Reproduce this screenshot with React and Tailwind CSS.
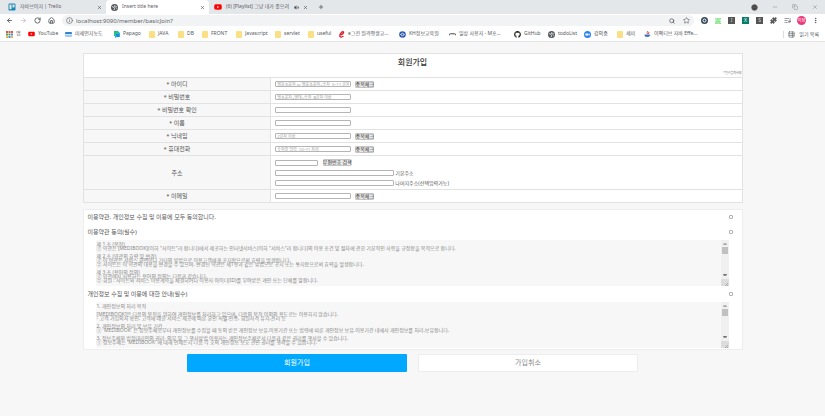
import React from "react";
import { ArrowLeft, ArrowRight, RotateCw, House, Info, Search, Star, Puzzle, ListMusic, EllipsisVertical, X, Plus, Minus, Copy, Volume2, CircleChevronDown, TableProperties, Mail } from "lucide-react";
import { FaGithub, FaYoutube, FaTrello, FaJava } from "react-icons/fa";

const Folder = () => <span className="h-[7px] w-[6px] rounded-[1px] bg-[#fbdf85]" />;

const WorldIcon = () => (
  <svg viewBox="0 0 16 16" className="size-[7px] shrink-0">
    <circle cx="8" cy="8" r="8" fill="#50555a" />
    <path d="M2 6l4 1 2 3-1 4M7 2l2 2-1 2 3 1 3-1M11 10l2 1" stroke="#f2f3f4" strokeWidth="2" fill="none" />
  </svg>
);

const bookmarks = [
  { w: "w-[22px]", icon: <svg viewBox="0 0 7 7" className="size-[7px]"><path d="M0 0h2v2H0zM2.5 0h2v2h-2zM5 0h2v2H5z" fill="#e8553e" /><path d="M0 2.5h2v2H0zM2.5 2.5h2v2h-2z" fill="#45a35b" /><path d="M5 2.5h2v2H5zM2.5 5h2v2h-2z" fill="#4c86e8" /><path d="M0 5h2v2H0zM5 5h2v2H5z" fill="#f0b83b" /></svg>, text: "앱" },
  { w: "w-[37px]", icon: <FaYoutube className="size-[8px] text-[#f00]" />, text: "YouTube" },
  { w: "w-[48px]", icon: <svg viewBox="0 0 7 7" className="size-[7px]"><path d="M0 2q0-1 1-1h5q1 0 1 1v1H0z" fill="#2f83cf" /><path d="M0 3.5h7V5q0 1-1 1H1Q0 6 0 5z" fill="#9ccbef" /></svg>, text: "미세먼지농도" },
  { w: "w-[35px]", icon: <svg viewBox="0 0 7 7" className="size-[7px]"><path d="M1 0h4l2 2v4H4L2 7V5H1z" fill="#20b8d8" /><path d="M1 0h4v2L3 4H1z" fill="#25c279" /><path d="M3 3h3v3H4z" fill="#287de8" /></svg>, text: "Papago" },
  { w: "w-[29px]", icon: <Folder />, text: "JAVA" },
  { w: "w-[24px]", icon: <Folder />, text: "DB" },
  { w: "w-[34px]", icon: <Folder />, text: "FRONT" },
  { w: "w-[39px]", icon: <Folder />, text: "Javascript" },
  { w: "w-[33px]", icon: <Folder />, text: "servlet" },
  { w: "w-[31px]", icon: <Folder />, text: "useful" },
  { w: "w-[61px]", icon: <svg viewBox="0 0 7 7" className="size-[7px]"><path d="M1.5 4.2Q5.5 3.2 5.6 1.2 5 .2 3.4 1.4 1.2 3.4 1.8 5.4 3 7 5.4 5" fill="none" stroke="#d8202c" strokeWidth="1.3" /></svg>, text: "e그린 원격평생교..." },
  { w: "w-[50px]", icon: <svg viewBox="0 0 7 7" className="size-[7px]"><circle cx="3.5" cy="3.5" r="3.3" fill="#2c5cae" /><path d="M1.5 3.5Q3.5 1 5.5 3.5 3.5 6 1.5 3.5" fill="none" stroke="#fff" strokeWidth=".8" /></svg>, text: "KH정보교육원" },
  { w: "w-[65px]", icon: <svg viewBox="0 0 7 7" className="size-[7px]"><path d="M0 4.5Q0 2.8 1.5 2.8h4Q7 2.8 7 4.5" fill="none" stroke="#444" strokeWidth="1" /></svg>, text: "일상 사용자 - M포..." },
  { w: "w-[34px]", icon: <FaGithub className="size-[7px] text-[#222]" />, text: "GitHub" },
  { w: "w-[36px]", icon: <WorldIcon />, text: "todoList" },
  { w: "w-[32px]", icon: <svg viewBox="0 0 7 7" className="size-[7px]"><circle cx="3.5" cy="3.5" r="3.5" fill="#2b82f5" /><path d="M1.4 2.5h2.8v2H1.4zM4.5 3l1.2-.6v2.2L4.5 4z" fill="#fff" /></svg>, text: "강의줌" },
  { w: "w-[28px]", icon: <Folder />, text: "세미" },
  {
    w: "w-[62px]",
    icon: (
      <svg viewBox="0 0 7 7" className="size-[7px]">
        <path d="M4 0Q2.4 1.4 3.6 2.8M5.2 1Q4 2 4.6 3" fill="none" stroke="#e0393e" strokeWidth=".9" />
        <path d="M.6 3.6h5.2v1.2Q5.4 6 3.2 6 1 6 .6 4.8zM5.8 3.9q1.2 0 .2 1.3" fill="#3f74c4" />
      </svg>
    ),
    text: "이펙티브 자바 Effe...",
  },
];

function Tab({ icon, title, active, audio }) {
  return (
    <div className={"flex h-full w-[103px] shrink-0 items-center gap-[4px] pr-[4px] pl-[5px] " + (active ? "rounded-t-[4px] bg-white" : "")}>
      {icon}
      <span className="flex-1 text-[5px] whitespace-nowrap text-[#5c6064]">{title}</span>
      {audio && <Volume2 className="size-[5px] shrink-0 fill-[#555]" />}
      <button aria-label="탭 닫기"><X className="size-[5px]" strokeWidth={3} /></button>
    </div>
  );
}

function Browser() {
  return (
    <header className="border-b border-[#e2e3e5] bg-white text-[#55595d]">
      <div className="flex h-[14px] items-center bg-[#e4e7ea] pl-[3px]">
        <Tab icon={<FaTrello className="size-[8px] text-[#1787b5]" />} title="자바브이지 | Trello" />
        <Tab active icon={<WorldIcon />} title="Insert title here" />
        <Tab audio icon={<FaYoutube className="size-[8px] shrink-0 text-[#f00]" />} title="(6) [Playlist] 그냥 내가 좋으려" />
        <button aria-label="새 탭" className="ml-[6px]"><Plus className="size-[6px]" strokeWidth={3} /></button>
        <div className="ml-auto flex items-center gap-[14px] pr-[7px] text-[#888]">
          <CircleChevronDown className="size-[7px] fill-[#444] text-[#777]" />
          <button aria-label="최소화"><Minus className="size-[6px]" /></button>
          <button aria-label="창 복원"><Copy className="size-[6px]" /></button>
          <button aria-label="닫기"><X className="size-[6px]" /></button>
        </div>
      </div>
      <div className="flex h-[13px] items-center gap-[7px] pr-[6px] pl-[6px]">
        <button aria-label="뒤로"><ArrowLeft className="size-[7px]" strokeWidth={3} /></button>
        <button aria-label="앞으로" className="text-[#aaa]"><ArrowRight className="size-[7px]" /></button>
        <button aria-label="새로고침"><RotateCw className="size-[7px]" strokeWidth={3} /></button>
        <button aria-label="홈"><House className="size-[7px]" strokeWidth={3} /></button>
        <div className="flex h-[11px] flex-1 items-center gap-[3px] rounded-full bg-[#f1f3f4] px-[4px]">
          <Info className="size-[7px]" />
          <input aria-label="주소창" defaultValue="localhost:9090/member/basicJoin?" className="min-w-0 flex-1 bg-transparent text-[6px] leading-[8px] text-[#62666a] outline-none" />
          <Search className="size-[6px]" strokeWidth={3} />
          <Star className="ml-[5px] size-[7px]" />
        </div>
        <svg viewBox="0 0 7 7" className="size-[7px]"><circle cx="3.5" cy="3.5" r="3.5" fill="#34495b" /><circle cx="3.5" cy="3.5" r="1.5" fill="none" stroke="#fff" /></svg>
        <Mail className="size-[6px] bg-[#7de27e] text-white" />
        <span className="size-[7px] bg-[#555] text-center text-[5px] leading-[7px] text-[#ddd]">I</span>
        <span className="size-[7px] bg-[#087d6b] text-center text-[5px] leading-[7px] text-white">X</span>
        <span className="size-[7px] bg-[#555] text-center text-[5px] leading-[7px] text-[#ddd]">S</span>
        <Puzzle className="size-[7px] fill-[#555]" />
        <ListMusic className="size-[7px]" />
        <span className="-mx-[1px] size-[9px] rounded-full bg-[#e9387b] text-center text-[4px] leading-[9px] text-white">미정</span>
        <EllipsisVertical className="size-[7px]" strokeWidth={3} />
      </div>
      <nav className="flex h-[14px] items-center pr-[6px] pl-[6px] text-[5px]">
        {bookmarks.map((b) => (
          <a key={b.text} href="#" className={"flex shrink-0 items-center gap-[3px] whitespace-nowrap " + b.w}>
            <span className="flex w-[7px] shrink-0 justify-center">{b.icon}</span>
            <span>{b.text}</span>
          </a>
        ))}
        <a href="#" className="ml-auto flex items-center gap-[4px] border-l border-[#ddd] pl-[4px] leading-[7px] whitespace-nowrap">
          <TableProperties className="size-[7px]" />읽기 목록
        </a>
      </nav>
    </header>
  );
}

const field = "h-[6px] rounded-[1px] border border-[#b5b5b5] bg-white px-px text-[4px] leading-[4px] placeholder:text-[#999] outline-none";
const smallButton = "flex h-[7px] items-center justify-center rounded-[1px] border border-[#c5c5c5] bg-[#e9e9e9] text-[5px] leading-[5px] whitespace-nowrap text-[#333]";

function Row({ id, label, placeholder, button, type = "text" }) {
  return (
    <tr className="h-[13px]">
      <th scope="row" className="border border-[#e2e2e2] bg-[#f7f7f7] p-0 text-[6px] leading-[8px] font-normal">
        <label htmlFor={id}>* {label}</label>
      </th>
      <td className="border border-[#e2e2e2] bg-white p-0 pl-[4px]">
        <div className="flex items-center gap-[4px]">
          <input id={id} type={type} placeholder={placeholder} className={"w-[76px] " + field} />
          {button && <button type="button" className={"w-[19px] " + smallButton}>중복체크</button>}
        </div>
      </td>
    </tr>
  );
}

const terms = `제 1 조 (목적)
① 약관은 [MEDIBOOK](이하 "사이트"라 합니다)에서 제공하는 인터넷서비스(이하 "서비스"라 합니다)의 이용 조건 및 절차에 관한 기본적인 사항을 규정함을 목적으로 합니다.

제 2 조 (약관의 효력 및 변경)
① 이 약관은 서비스 화면이나 기타의 방법으로 이용고객에게 공지함으로써 효력을 발생합니다.
② 사이트는 이 약관의 내용을 변경할 수 있으며, 변경된 약관은 제1항과 같은 방법으로 공지 또는 통지함으로써 효력을 발생합니다.

제 3 조 (용어의 정의)
① 약관에서 사용하는 용어의 정의는 다음과 같습니다.
② 회원 : 사이트와 서비스 이용계약을 체결하거나 이용자 아이디(ID)를 부여받은 개인 또는 단체를 말합니다.`;

const privacy = `1. 개인정보의 처리 목적

[MEDIBOOK]은 다음의 목적을 위하여 개인정보를 처리하고 있으며, 다음의 목적 이외의 용도로는 이용하지 않습니다.
- 고객 가입의사 확인, 고객에 대한 서비스 제공에 따른 본인 식별.인증, 회원자격 유지.관리 등

2. 개인정보의 처리 및 보유 기간
① 'MEDIBOOK' 은 정보주체로부터 개인정보를 수집할 때 동의 받은 개인정보 보유.이용기간 또는 법령에 따른 개인정보 보유.이용기간 내에서 개인정보를 처리.보유합니다.

3. 정보주체와 법정대리인의 권리· 의무 및 그 행사방법 이용자는 개인정보주체로서 다음과 같은 권리를 행사할 수 있습니다.
① 정보주체는 'MEDIBOOK' 에 대해 언제든지 다음 각 호의 개인정보 보호 관련 권리를 행사할 수 있습니다.`;

function Terms({ label, text }) {
  return (
    <div className="mr-[13px] ml-[12px] flex h-[46px] bg-[#f7f7f7]">
      <textarea aria-label={label} readOnly wrap="off" value={text} className="block h-full min-w-0 flex-1 resize-none overflow-hidden px-[1px] pt-[2px] text-[5px] leading-[4px] text-[#888] outline-none" />
      <div className="flex w-[8px] flex-col items-center bg-[#f0f0f0] pt-[3px]">
        <span className="h-[2px] w-[4px] rounded-t-full bg-[#aaa]" />
        <span className="mt-[2px] h-[7px] w-[6px] bg-[#c1c1c1]" />
        <span className="mt-auto mb-[3px] h-[2px] w-[4px] rounded-b-full bg-[#777]" />
        <svg viewBox="0 0 8 7" className="h-[7px] w-full bg-[#dcdcdc]"><path d="M4 7l3-3M6 7l1-1" stroke="#999" strokeWidth=".8" /></svg>
      </div>
    </div>
  );
}

function Agree({ id, label }) {
  return (
    <div className="flex h-[15px] items-center justify-between pr-[9px] pb-[2px] pl-[4px]">
      <label htmlFor={id} className="text-[6px] leading-[8px]">{label}</label>
      <input id={id} type="checkbox" className="size-[4px] appearance-none rounded-[1px] border border-[#b0b0b0] bg-white" />
    </div>
  );
}

export default function App() {
  return (
    <div className="min-h-screen bg-[#f7f7f7] font-['Noto_Sans','Noto_Sans_CJK_KR',sans-serif] text-[#555]">
      <Browser />
      <form className="mx-auto w-4/5 pt-[11px]" onSubmit={(e) => e.preventDefault()}>
        <div className="h-[24px] border border-b-0 border-[#e2e2e2] bg-white">
          <h1 className="pt-px text-center text-[8px] leading-[14px] font-medium text-[#333]">회원가입</h1>
          <p className="pt-px text-right text-[3px] leading-[6px] text-[#777]">*필수입력사항</p>
        </div>
        <table className="w-full table-fixed border-collapse border border-[#e2e2e2]">
          <colgroup><col className="w-[28.5%]" /><col /></colgroup>
          <tbody>
            <Row id="userid" label="아이디" placeholder="영문소문자 or 영문소문자+숫자, 5~11 글자" button />
            <Row id="pw" label="비밀번호" type="password" placeholder="영소문자+영대+숫자, 8글자 이상" />
            <Row id="pw2" label="비밀번호 확인" type="password" />
            <Row id="name" label="이름" />
            <Row id="nick" label="닉네임" placeholder="2글자 이상" button />
            <Row id="phone" label="휴대전화" placeholder="숫자만 입력, 10~11 자리" button />
            <tr className="h-[34px]">
              <th scope="row" className="border border-[#e2e2e2] bg-[#f7f7f7] p-0 text-[6px] leading-[8px] font-normal"><label htmlFor="zip">주소</label></th>
              <td className="border border-[#e2e2e2] bg-white p-0 pl-[4px]">
                <div className="flex flex-col gap-[4px]">
                  <div className="flex items-center gap-[5px]">
                    <input id="zip" className={"w-[43px] " + field} />
                    <button type="button" className={"w-[28px] " + smallButton}>우편번호 검색</button>
                  </div>
                  <div className="flex items-center gap-[1px]">
                    <input id="addr1" className={"w-[119px] " + field} />
                    <label htmlFor="addr1" className="text-[5px] leading-[6px]">기본주소</label>
                  </div>
                  <div className="flex items-center gap-[1px]">
                    <input id="addr2" className={"w-[119px] " + field} />
                    <label htmlFor="addr2" className="text-[5px] leading-[6px]">나머지주소(선택입력가능)</label>
                  </div>
                </div>
              </td>
            </tr>
            <Row id="email" label="이메일" type="email" button />
          </tbody>
        </table>
        <section className="mt-[6px] border border-[#ededed] bg-white pb-px">
          <Agree id="all" label="이용약관, 개인정보 수집 및 이용에 모두 동의합니다." />
          <Agree id="terms" label="이용약관 동의(필수)" />
          <Terms label="이용약관" text={terms} />
          <div className="pt-px">
            <Agree id="privacy" label="개인정보 수집 및 이용에 대한 안내(필수)" />
          </div>
          <Terms label="개인정보 수집 및 이용" text={privacy} />
        </section>
        <div className="mt-[4px] flex justify-center gap-[11px] text-[7px]">
          <button type="submit" className="h-[18px] w-1/3 rounded-[1px] bg-[#00a8ff] text-white">회원가입</button>
          <button type="button" className="h-[18px] w-1/3 border border-[#ededed] bg-white text-[#888]">가입취소</button>
        </div>
      </form>
    </div>
  );
}
